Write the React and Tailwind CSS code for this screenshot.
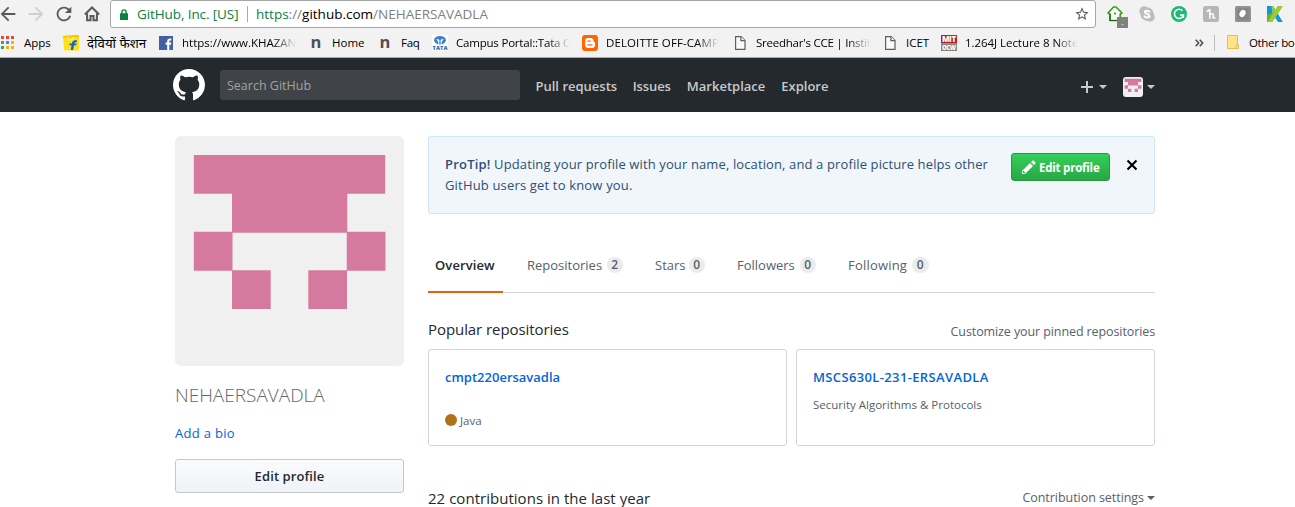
function Glyph({ d, box = "0 0 24 24", className = "" }) {
  return (
    <svg viewBox={box} className={`block shrink-0 fill-current ${className}`} aria-hidden="true">
      <path d={d} />
    </svg>
  );
}

const paths = {
  back: "M20 11H7.83l5.59-5.59L12 4l-8 8 8 8 1.41-1.41L7.83 13H20z",
  forward: "M12 4l-1.41 1.41L16.17 11H4v2h12.17l-5.58 5.59L12 20l8-8z",
  reload:
    "M17.65 6.35C16.2 4.9 14.21 4 12 4c-4.42 0-7.99 3.58-7.99 8s3.57 8 7.99 8c3.73 0 6.84-2.55 7.73-6h-2.08c-.82 2.33-3.04 4-5.65 4-3.31 0-6-2.69-6-6s2.69-6 6-6c1.66 0 3.14.69 4.22 1.78L13 11h7V4z",
  star: "M22 9.24l-7.19-.62L12 2 9.19 8.63 2 9.24l5.46 4.73L5.82 21 12 17.27 18.18 21l-1.63-7.03L22 9.24zM12 15.4l-3.76 2.27 1-4.28-3.32-2.88 4.38-.38L12 6.1l1.71 4.04 4.38.38-3.32 2.88 1 4.28L12 15.4z",
  mark: "M8 0C3.58 0 0 3.58 0 8c0 3.54 2.29 6.53 5.47 7.59.4.07.55-.17.55-.38 0-.19-.01-.82-.01-1.49-2.01.37-2.53-.49-2.69-.94-.09-.23-.48-.94-.82-1.13-.28-.15-.68-.52-.01-.53.63-.01 1.08.58 1.23.82.72 1.21 1.87.87 2.33.66.07-.52.28-.87.51-1.07-1.78-.2-3.64-.89-3.64-3.95 0-.87.31-1.59.82-2.15-.08-.2-.36-1.02.08-2.12 0 0 .67-.21 2.2.82.64-.18 1.32-.27 2-.27s1.36.09 2 .27c1.53-1.04 2.2-.82 2.2-.82.44 1.1.16 1.92.08 2.12.51.56.82 1.27.82 2.15 0 3.07-1.87 3.75-3.65 3.95.29.25.54.73.54 1.48 0 1.07-.01 1.93-.01 2.2 0 .21.15.46.55.38A8.01 8.01 0 0 0 16 8c0-4.42-3.58-8-8-8z",
  plus: "M12 9H7v5H5V9H0V7h5V2h2v5h5z",
  pencil:
    "M0 12v3h3l8-8-3-3-8 8zm3 2H1v-2h1v1h1v1zm10.3-9.3L12 6 9 3l1.3-1.3a.996.996 0 0 1 1.41 0l1.59 1.59c.39.39.39 1.02 0 1.41z",
  close:
    "M7.48 8l3.75 3.75-1.48 1.48L6 9.48l-3.75 3.75-1.48-1.48L4.52 8 .77 4.25l1.48-1.48L6 6.52l3.75-3.75 1.48 1.48z",
};

function Caret({ className = "" }) {
  return <span className={`block h-0 w-0 border-x-4 border-t-4 border-b-0 border-x-transparent ${className}`} />;
}

function Identicon({ className = "" }) {
  return (
    <svg viewBox="0 0 420 420" preserveAspectRatio="none" className={`block shrink-0 ${className}`} aria-hidden="true">
      <path fill="#f0f0f0" d="M0 0h420v420H0z" />
      <path
        fill="#d6799f"
        d="M34.500 34.500h351v71H316v71H104.500v-71h-70zM34.500 175h71v71h-71zM315 175h71v71h-71zM104.500 245h71v71h-71zM244.500 245h71v71h-71z"
      />
    </svg>
  );
}

function HomeIcon() {
  return (
    <svg viewBox="0 0 16 16" className="block size-4 shrink-0" fill="none" stroke="#5a5a5a" strokeWidth="2" aria-hidden="true">
      <path d="M.9 8.500L8 1.500l7.100 7M3.100 7.400v6.900h3.400V10h3v4.300h3.400V7.400" />
    </svg>
  );
}

function AppsIcon() {
  const colors = ["#e8453c", "#e8453c", "#e8453c", "#3aa757", "#4285f4", "#f4b400", "#3aa757", "#f4b400", "#f4b400"];
  return (
    <div className="grid w-[14px] grid-cols-[4px_4px_4px] grid-rows-[4px_4px_4px] gap-px">
      {colors.map((c, i) => (
        <span key={i} className="size-[3.4px]" style={{ backgroundColor: c }} />
      ))}
    </div>
  );
}

function FlipkartIcon() {
  return (
    <svg viewBox="0 0 16 16" className="block size-4" aria-hidden="true">
      <path fill="#ffe11b" d="M0 1l16-1v15.500H1z" />
      <path fill="#f5c400" d="M0 1l16-1-.2 2.500H.2z" />
      <path fill="none" stroke="#fff" strokeWidth=".9" d="M4.500 2c.3 4 5.700 4 6.200 0" />
      <path fill="#0b66d0" d="M14 5.500c-3.600-.7-4.800 1-5.100 2.900H6.600l-.4 1.800h2.300L7.700 15h2.500l.8-4.800h2.200l.4-1.800h-2.300c.3-1.100.9-1.400 2.400-1.200z" />
    </svg>
  );
}

function FacebookIcon() {
  return (
    <svg viewBox="0 0 16 16" className="block size-4" aria-hidden="true">
      <rect x="1" y="1" width="14" height="14" fill="#4460a0" />
      <path fill="#fff" d="M9.200 15V9.700H7.600V7.600h1.600V6.100c0-1.800 1-2.700 2.600-2.700h1.500v2h-1c-.8 0-1 .4-1 1v1.200h2l-.3 2.100h-1.700V15z" />
    </svg>
  );
}

function NIcon() {
  return (
    <span className="flex size-4 items-center justify-center pb-px font-['Open_Sans',sans-serif] text-[16.5px] leading-4 font-bold text-[#505050]">
      n
    </span>
  );
}

function TataIcon() {
  return (
    <svg viewBox="0 0 16 16" className="block size-4" aria-hidden="true">
      <path fill="#fff" d="M0 0h16v16H0z" />
      <ellipse cx="8" cy="5.200" rx="5.900" ry="4.200" fill="#3d7fc4" />
      <path fill="#fff" d="M4 4.600c1.800-.6 3.300-.3 3.400.7l-.2 4.400h-.9c.3-2.600-.3-4.300-2.300-5.100zM12 4.600c-1.800-.6-3.300-.3-3.400.7l.2 4.400h.9c-.3-2.600.3-4.300 2.300-5.100z" />
      <text x="8" y="15" textAnchor="middle" textLength="15" fontSize="5.600" fontWeight="800" fill="#2f6fb5" fontFamily="Open Sans, sans-serif">
        TATA
      </text>
    </svg>
  );
}

function BloggerIcon() {
  return (
    <svg viewBox="0 0 16 16" className="block size-4" aria-hidden="true">
      <rect width="16" height="16" rx="3" fill="#ff6600" />
      <path fill="#fff" d="M6 3h2.600c1.700 0 2.900 1.200 2.900 2.800 0 1 .3 1.300 1 1.300.4 0 .6.300.6.700v2.300c0 1.700-1.200 2.900-2.900 2.900H6c-1.700 0-2.900-1.200-2.900-2.900V5.900C3.100 4.200 4.300 3 6 3z" />
      <path stroke="#ff6600" strokeWidth="1.400" strokeLinecap="round" d="M6 6.100h2.200M6 9.900h4" />
    </svg>
  );
}

function PageIcon() {
  return (
    <svg viewBox="0 0 16 16" className="block size-4" fill="#fafafa" stroke="#5e5e5e" strokeWidth="1.200" aria-hidden="true">
      <path d="M3.600 1.600h5.600l3.800 3.800v9H3.600z" />
      <path d="M8.900 1.600v4h4.100" />
    </svg>
  );
}

function MitIcon() {
  return (
    <svg viewBox="0 0 16 16" className="block size-4 overflow-visible" fontFamily="Open Sans, sans-serif" aria-hidden="true">
      <path fill="#b3202a" d="M0 0h16v8.500H0z" />
      <path fill="#8b857a" d="M0 8.500h16V16H0z" />
      <text x="8" y="7.200" textAnchor="middle" textLength="14" fontSize="7.800" fontWeight="800" fill="#fff">
        MIT
      </text>
      <text x="8" y="14.500" textAnchor="middle" textLength="14" fontSize="6" fontWeight="800" fill="#fff">
        OCW
      </text>
    </svg>
  );
}

const fade = "[mask-image:linear-gradient(to_right,#000_80%,transparent_100%)]";

const bookmarks = [
  { label: "Apps", Icon: AppsIcon, box: "w-[63px]", text: "" },
  { label: "देवियों फैशन", Icon: FlipkartIcon, box: "w-[95px]", text: "text-[13.3px]" },
  { label: "https://www.KHAZAN", Icon: FacebookIcon, box: "w-[150px]", text: fade },
  { label: "Home", Icon: NIcon, box: "w-[69px]", text: "" },
  { label: "Faq", Icon: NIcon, box: "w-[55px]", text: "tracking-[-0.3px]" },
  { label: "Campus Portal::Tata C", Icon: TataIcon, box: "w-[150px]", text: `tracking-[-0.2px] ${fade}` },
  { label: "DELOITTE OFF-CAMP", Icon: BloggerIcon, box: "w-[150px]", text: `tracking-[0.1px] ${fade}` },
  { label: "Sreedhar's CCE | Instit", Icon: PageIcon, box: "w-[150px]", text: `tracking-[-0.24px] ${fade}` },
  { label: "ICET", Icon: PageIcon, box: "w-[59px]", text: "" },
  { label: "1.264J Lecture 8 Note", Icon: MitIcon, box: "w-[150px]", text: `tracking-[-0.05px] ${fade}` },
];

function Extensions() {
  return (
    <div className="ml-[11px] flex h-7 items-center gap-4">
      <div className="relative size-4">
        <svg viewBox="0 0 16 16" className="block size-4" aria-hidden="true">
          <path fill="#fff" stroke="#2fa80c" strokeWidth="1.700" strokeLinejoin="round" d="M1 7L6.500 1h2.500L15 7l-1.800 1v6.500H3V8z" />
          <path fill="none" stroke="#1b6b08" strokeWidth="1.200" d="M3 8v6.500h10" />
          <circle cx="8" cy="7.500" r=".9" fill="#2c5d1b" />
        </svg>
        <span className="absolute top-[11px] left-[10px] flex h-[11px] w-[11px] items-center justify-center bg-[#808080] text-[8px] leading-none text-white">
          -
        </span>
      </div>
      <svg viewBox="0 0 16 16" className="block size-4" aria-hidden="true">
        <circle cx="5" cy="5" r="4.700" fill="#bdbdbd" />
        <circle cx="11" cy="11" r="4.700" fill="#bdbdbd" />
        <circle cx="8" cy="8" r="6.700" fill="#bdbdbd" />
        <path fill="none" stroke="#fff" strokeWidth="2" strokeLinecap="round" d="M10.400 5.700C9.500 4.300 5.900 4.200 5.800 6.100c0 2.100 4.700 1.500 4.700 3.800 0 2-4 2.100-5 .4" />
      </svg>
      <svg viewBox="0 0 16 16" className="block size-4" aria-hidden="true">
        <circle cx="8" cy="8" r="8" fill="#1cb975" />
        <path fill="none" stroke="#fff" strokeWidth="1.600" d="M11.400 4.700A4.600 4.600 0 1 0 12.500 9H9M12.400 8.300v3.600" />
      </svg>
      <svg viewBox="0 0 16 16" className="block size-4" aria-hidden="true">
        <rect width="16" height="16" rx="2.500" fill="#b7b7b9" />
        <path
          fill="none"
          stroke="#fff"
          strokeWidth="1.500"
          strokeLinecap="round"
          strokeLinejoin="round"
          d="M4 5.200c1.200 0 2-.8 2.800-1.700v8.700M6.800 9c.8-1.600 3.800-2 3.600.3l-.2 1.700c0 1.200.8 1.300 1.700.8"
        />
      </svg>
      <svg viewBox="0 0 16 16" className="block size-4" aria-hidden="true">
        <rect width="16" height="16" rx="1.500" fill="#929292" />
        <rect x="2" y="2" width="12" height="12" rx="2" fill="#868686" />
        <ellipse cx="7.500" cy="7.500" rx="2.800" ry="3.800" transform="rotate(30 7.500 7.500)" fill="#fff" />
      </svg>
      <svg viewBox="0 0 16 16" className="block size-4" aria-hidden="true">
        <path fill="#0f96dc" d="M0 0h6l5 8 4.800 8H11L7 10 2.500 14H0z" />
        <path fill="#6fae2e" d="M0 8.500L5 7l1.500 4L4 16H0z" />
        <path fill="#9bcb3a" d="M4.500 0h2l2.500 7-3 5.500zM10.500 0H16L5.500 16H.5z" />
      </svg>
    </div>
  );
}

function BrowserChrome() {
  return (
    <div className="h-[58px] border-b border-[#a8a8a8] bg-[#f2f2f2]">
      <div className="flex h-7">
        <div className="flex w-[110px] shrink-0 items-center text-[#5a5a5a]">
          <Glyph d={paths.back} className="-ml-[3px] size-[22px]" />
          <Glyph d={paths.forward} className="ml-[6px] size-[22px] text-[#cfcfcf]" />
          <Glyph d={paths.reload} className="ml-[6px] size-[22px]" />
          <span className="ml-[9px]">
            <HomeIcon />
          </span>
        </div>
        <div className="flex h-7 w-[986px] shrink-0 items-center rounded-[3px] border border-[#a6a6a6] bg-white pr-[5px] pl-[9px] text-[13.5px] whitespace-nowrap">
          <svg viewBox="0 0 8 11" className="block h-[11px] w-2" aria-hidden="true">
            <path fill="none" stroke="#0b8043" strokeWidth="1.400" d="M1.900 5V3a2.100 2.100 0 0 1 4.200 0v2" />
            <rect y="4.200" width="8" height="6.800" rx=".6" fill="#0b8043" />
          </svg>
          <span className="ml-[9px] w-[111px] tracking-[-0.1px] text-[#0b8043]">GitHub, Inc. [US]</span>
          <span className="-ml-px h-[16px] w-px bg-[#a9a9a9]" />
          <span className="ml-[8px] text-[#808080]">
            <span className="text-[#0b8043]">https</span>://<span className="text-black">github.com</span>/NEHAERSAVADLA
          </span>
          <Glyph d={paths.star} className="ml-auto size-4 text-[#5a5a5a]" />
        </div>
        <Extensions />
      </div>
      <div className="flex h-[29px] items-center text-[11.5px] whitespace-nowrap text-black">
        {bookmarks.map(({ label, Icon, box, text }) => (
          <div key={label} className={`flex shrink-0 items-center gap-2 ${box}`}>
            <span className="flex size-4 shrink-0 items-center justify-center">
              <Icon />
            </span>
            <span className={`leading-[20px] ${text}`}>{label}</span>
          </div>
        ))}
        <svg viewBox="0 0 9 8" className="ml-[104px] h-2 w-[9px] shrink-0" fill="none" stroke="#4a4a4a" strokeWidth="1.500" aria-hidden="true">
          <path d="M.7.8L3.700 4l-3 3.200M4.700.8l3 3.200-3 3.200" />
        </svg>
        <span className="ml-[10px] h-4 w-px shrink-0 bg-[#bdbdbd]" />
        <svg viewBox="0 0 13 15" className="ml-[12px] h-[15px] w-[13px] shrink-0" fill="#ffe48a" stroke="#e8be4c" aria-hidden="true">
          <path d="M.5.5h10v9.500h1v3.500H.5z" />
          <path d="M9 13.500V10h2" />
        </svg>
        <span className="ml-[9px] shrink-0 tracking-[-0.35px]">Other bo</span>
      </div>
    </div>
  );
}

function Header() {
  return (
    <header className="h-[54px] bg-[#24292e]">
      <div className="ml-[173px] flex h-[54px] w-[982px] items-center">
        <Glyph d={paths.mark} box="0 0 16 16" className="size-8 text-white" />
        <div className="ml-[15px] h-[30px] w-[300px] rounded-[3px] bg-[#404448] px-[7px] text-[12.5px] leading-[32px] text-[#a0a2a4]">
          Search GitHub
        </div>
        <nav className="ml-[15.5px] flex gap-[16px] pt-[3px] text-[13px] font-semibold text-[#c8c9cb]">
          <span>Pull requests</span>
          <span className="-ml-[0.4px] tracking-[-0.1px]">Issues</span>
          <span>Marketplace</span>
          <span>Explore</span>
        </nav>
        <div className="ml-auto flex items-center pt-[4px] text-[#c8c9cb]">
          <Glyph d={paths.plus} box="0 0 12 16" className="h-4 w-3" />
          <Caret className="ml-[6px] border-t-[#c8c9cb]" />
          <Identicon className="ml-4 size-5 rounded-[3px]" />
          <Caret className="ml-[4px] border-t-[#c8c9cb]" />
        </div>
      </div>
    </header>
  );
}

function Tab({ label, count, className }) {
  return (
    <div className={`flex items-center ${className}`}>
      <span className="pt-[2px]">{label}</span>
      <span className="ml-auto flex h-4 w-[16.5px] items-center justify-center rounded-full bg-[#ebebeb] text-[12px] font-semibold text-[#586069]">
        {count}
      </span>
    </div>
  );
}

function RepoCard({ title, titleClass, children }) {
  return (
    <div className="h-[97px] w-[359px] rounded-[3px] border border-[#d1d5da] px-4 pt-4">
      <div className={`h-[22px] text-[13px] leading-[22px] font-semibold text-[#0366d6] ${titleClass}`}>{title}</div>
      {children}
    </div>
  );
}

export default function App() {
  return (
    <div className="h-[507px] w-[1295px] overflow-hidden bg-white font-['Open_Sans','Noto_Sans',sans-serif] text-[#24292e]">
      <BrowserChrome />
      <Header />
      <div className="ml-[175px] flex w-[980px] gap-6 pt-6">
        <aside className="w-[229px] shrink-0">
          <Identicon className="h-[230px] w-[229px] rounded-[6px]" />
          <div className="mt-[17px] text-[19px] leading-[25px] font-light text-[#666]">NEHAERSAVADLA</div>
          <div className="mt-[15px] text-[13px] leading-[20px] tracking-[0.3px] text-[#0366d6]">Add a bio</div>
          <div className="mt-4 h-[34px] rounded-[3px] border border-[#c6c9cc] bg-linear-to-b from-[#fafbfc] to-[#eff3f6] text-center text-[13px] leading-[32px] font-semibold tracking-[0.1px]">
            Edit profile
          </div>
        </aside>
        <main className="w-[727px] shrink-0">
          <div className="flex h-[78px] rounded-[3px] border border-[#cfe5f8] bg-[#f1f6fa] px-4 pt-4 text-[#2d4f75]">
            <p className="w-[566px] pt-px text-[13px] leading-[21px] tracking-[0.12px] whitespace-nowrap">
              <strong className="font-semibold tracking-[0.2px]">ProTip!</strong> Updating your profile with your name, location, and a profile picture helps other
              <br />
              <span className="tracking-[0.17px]">GitHub users get to know you.</span>
            </p>
            <div className="flex h-7 w-[99px] items-center rounded-[3px] border border-[#279a40] bg-linear-to-b from-[#34d058] to-[#28a745] pl-[10px] text-[11.5px] font-bold tracking-[-0.22px] whitespace-nowrap text-white">
              <Glyph d={paths.pencil} box="0 0 14 16" className="h-4 w-[14px]" />
              <span className="ml-[3px] pt-[2px]">Edit profile</span>
            </div>
            <Glyph d={paths.close} box="0 0 12 16" className="mt-1 ml-4 h-4 w-3 text-black" />
          </div>
          <div className="mt-[24px] flex h-[55px] border-b border-[#d1d5da] text-[13px] text-[#586069]">
            <div className="-mb-px h-[55px] w-[75px] border-b-2 border-[#e36209] pl-[7px] leading-[54px] font-semibold tracking-[0.1px] text-[#24292e]">
              Overview
            </div>
            <Tab label="Repositories" count="2" className="ml-[24px] w-[96px]" />
            <Tab label="Stars" count="0" className="ml-[32px] w-[50px]" />
            <Tab label="Followers" count="0" className="ml-[32px] w-[79px]" />
            <Tab label="Following" count="0" className="ml-[32px] w-[80.500px] tracking-[0.2px]" />
          </div>
          <div className="mt-[25px] flex h-[31px] justify-between">
            <h2 className="text-[15px] leading-[23px] tracking-[-0.07px]">Popular repositories</h2>
            <span className="text-[12.5px] leading-[27px] tracking-[-0.1px] text-[#586069]">Customize your pinned repositories</span>
          </div>
          <div className="flex gap-[9px]">
            <RepoCard title="cmpt220ersavadla" titleClass="">
              <div className="mt-[23px] flex h-[18px] items-center text-[11.5px] text-[#586069]">
                <span className="size-3 rounded-full bg-[#b07219]" />
                <span className="ml-[3px] pt-[2px]">Java</span>
              </div>
            </RepoCard>
            <RepoCard title="MSCS630L-231-ERSAVADLA" titleClass="tracking-[0.36px]">
              <div className="mt-[8px] text-[11.5px] leading-[18px] text-[#586069]">Security Algorithms &amp; Protocols</div>
            </RepoCard>
          </div>
          <div className="mt-[41px] flex justify-between">
            <h2 className="text-[15px] leading-[23px] tracking-[0.03px]">22 contributions in the last year</h2>
            <span className="flex h-[21px] items-center text-[12.5px] leading-[21px] tracking-[-0.05px] text-[#586069]">
              Contribution settings
              <Caret className="ml-[3px] border-t-[#586069]" />
            </span>
          </div>
        </main>
      </div>
    </div>
  );
}
